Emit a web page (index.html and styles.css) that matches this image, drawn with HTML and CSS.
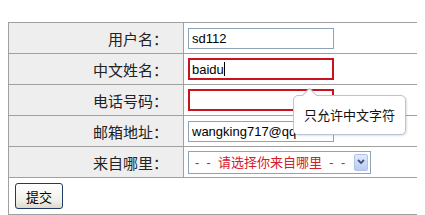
FILE: index.html
```html
<!DOCTYPE html>
<html lang="zh-CN">
<head>
  <meta charset="UTF-8">
  <title>注册</title>
  <link rel="stylesheet" href="styles.css">
</head>
<body>

<form class="reg-form">
  <table class="form-table">
    <tr>
      <td class="label">用户名：</td>
      <td class="field"><input class="text" type="text" value="sd112"></td>
    </tr>
    <tr>
      <td class="label">中文姓名：</td>
      <td class="field">
        <div class="input-wrap">
          <input class="text error" type="text" value="baidu">
          <span class="caret"></span>
        </div>
      </td>
    </tr>
    <tr>
      <td class="label">电话号码：</td>
      <td class="field">
        <div class="input-wrap">
          <input class="text error" type="text" value="">
          <div class="tip">只允许中文字符</div>
        </div>
      </td>
    </tr>
    <tr>
      <td class="label">邮箱地址：</td>
      <td class="field"><input class="text" type="text" value="wangking717@qq"></td>
    </tr>
    <tr>
      <td class="label">来自哪里：</td>
      <td class="field">
        <div class="select-wrap">
          <select class="city">
            <option>-&nbsp;&nbsp;-&nbsp;&nbsp;请选择你来自哪里&nbsp;&nbsp;-&nbsp;&nbsp;-</option>
          </select>
          <span class="select-arrow">
            <svg width="8" height="6" viewBox="0 0 8 6"><path d="M1 1 L4 4 L7 1" fill="none" stroke="#3f5680" stroke-width="1.8"/></svg>
          </span>
        </div>
      </td>
    </tr>
    <tr>
      <td class="submit-cell" colspan="2"><button class="submit" type="button">提交</button></td>
    </tr>
  </table>
</form>

</body>
</html>
```

FILE: styles.css
```css
html, body { overflow: hidden; }
body {
  margin: 8px;
  font-family: "Liberation Sans", "Noto Sans CJK SC", sans-serif;
  background: #fff;
}

.form-table {
  margin-top: 14px;
  width: 460px;
  border-collapse: collapse;
  table-layout: fixed;
}
.form-table td {
  height: 30px;
  padding: 0 4px;
  border: 1px solid #a0a0a0;
}
.label {
  width: 155px;
  padding-right: 15px !important;
  text-align: right;
  background: #eeeeee;
  color: #222;
  font-family: "Noto Sans CJK SC", sans-serif;
  font-size: 15px;
}
.field { background: #fff; }

.text {
  display: block;
  box-sizing: border-box;
  width: 146px;
  height: 21px;
  margin: 0;
  padding: 0 3px;
  border: 1px solid #8ea3b8;
  font-family: "Liberation Sans", sans-serif;
  font-size: 13px;
  color: #000;
  outline: none;
}
.text.error {
  height: 22px;
  border: 2px solid #c8141e;
  padding: 0 2px;
}

.input-wrap { position: relative; width: 146px; }
.caret {
  position: absolute;
  left: 36px;
  top: 4px;
  width: 1px;
  height: 14px;
  background: #000;
}

.tip {
  position: absolute;
  left: 105px;
  top: 6px;
  z-index: 2;
  box-sizing: border-box;
  width: 113px;
  height: 40px;
  padding-left: 10px;
  line-height: 38px;
  border: 1px solid #b4c6d8;
  border-radius: 5px;
  background: #fff;
  box-shadow: 1px 1px 2px rgba(0, 0, 0, 0.12);
  font-family: "Noto Sans CJK SC", sans-serif;
  font-size: 13px;
  color: #111;
  white-space: nowrap;
}
.tip::before {
  content: "";
  position: absolute;
  left: 10px;
  top: -6px;
  width: 10px;
  height: 10px;
  background: #fff;
  border-left: 1px solid #b4c6d8;
  border-top: 1px solid #b4c6d8;
  transform: rotate(45deg);
}

.select-wrap { position: relative; width: 183px; }
.city {
  display: block;
  box-sizing: border-box;
  width: 183px;
  height: 23px;
  margin: 0;
  padding: 0 0 0 6px;
  border: 1px solid #8ea3b8;
  border-radius: 0;
  background: #fff;
  -webkit-appearance: none;
  appearance: none;
  font-family: "Liberation Sans", "Noto Sans CJK SC", sans-serif;
  font-size: 13px;
  color: #d4202a;
}
.select-arrow {
  position: absolute;
  right: 3px;
  top: 3px;
  box-sizing: border-box;
  width: 14px;
  height: 17px;
  border: 1px solid #b0c3ea;
  border-radius: 2px;
  background: linear-gradient(#e2eafc, #b8cbf3);
  display: flex;
  align-items: center;
  justify-content: center;
  pointer-events: none;
}

.submit-cell {
  height: 36px !important;
  padding-left: 6px !important;
  background: #fff;
  border-right: none !important;
}
.submit {
  display: block;
  width: 48px;
  height: 26px;
  padding: 0;
  border: 1px solid #1d3b66;
  border-radius: 3px;
  background: linear-gradient(#ffffff, #f0efe8 70%, #dcd9cc);
  font-family: "Noto Sans CJK SC", sans-serif;
  font-size: 13px;
  color: #000;
  cursor: pointer;
}
```
